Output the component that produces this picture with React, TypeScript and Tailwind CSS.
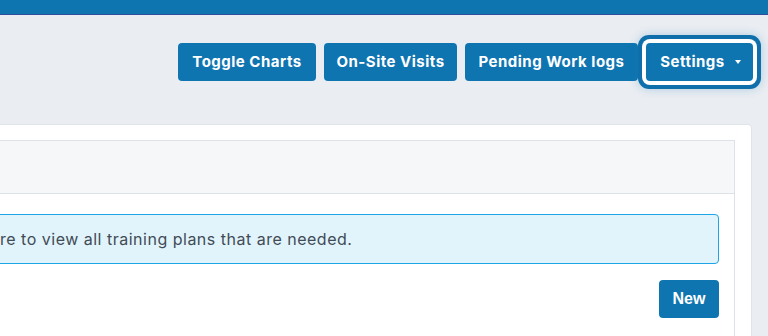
import React from "react";

const btn =
  "h-[38px] flex items-center justify-center rounded-[4px] bg-[#0f75b1] text-white text-[15px] font-bold tracking-[0.5px]";

export default function App() {
  return (
    <div
      className="min-h-screen w-full overflow-hidden bg-[#eaedf2]"
      style={{ fontFamily: "Inter, 'Open Sans', sans-serif" }}
    >
      <div className="h-[15px] bg-[#0f75b1] border-b border-[#2f4c9e]" />

      <div className="flex justify-end gap-2 pt-[28px] pr-[15px]">
        <button className={`${btn} w-[138px]`}>Toggle Charts</button>
        <button className={`${btn} w-[133px]`}>On-Site Visits</button>
        <button className={`${btn} w-[173px]`}>Pending Work logs</button>
        <button
          className={`${btn} w-[107px] gap-[10px] pl-[2px] ring-4 ring-[#0f6fab] ring-offset-4 ring-offset-white shadow-[0_0_10px_8px_rgba(15,117,177,0.28)]`}
        >
          Settings
          <span className="w-0 h-0 border-l-[3px] border-r-[3px] border-t-[4px] border-l-transparent border-r-transparent border-t-white" />
        </button>
      </div>

      <div className="mt-[43px] -ml-[40px] mr-4 rounded-[4px] border border-[#e0e4e9] bg-white px-4 pt-[15px]">
        <div className="h-[54px] bg-[#f6f7f9] border border-[#dde2e7]" />
        <div className="border-x border-b border-[#dde2e7] px-[15px] pt-[20px] pb-6">
          <div className="h-[50px] flex items-center rounded-[4px] border border-[#1da5e5] bg-[#e1f4fc] pl-[6px] text-[16px] tracking-[0.5px] text-[#414b55]">
            re to view all training plans that are needed.
          </div>
          <div className="flex justify-end mt-4">
            <button
              className="h-[38px] w-[60px] rounded-[4px] bg-[#0f75b1] text-white text-[16px] font-bold"
              style={{ fontFamily: "'Liberation Sans', Arial, sans-serif" }}
            >
              New
            </button>
          </div>
        </div>
      </div>
    </div>
  );
}
